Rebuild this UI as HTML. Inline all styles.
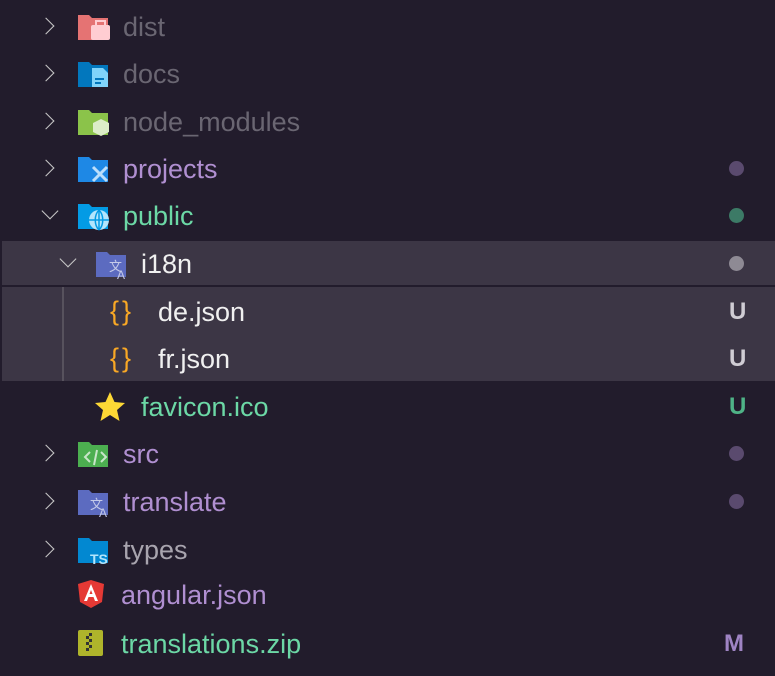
<!DOCTYPE html><html><head><style>
body{margin:0;width:775px;height:676px;background:#221c2c;font-family:"Liberation Sans",sans-serif;overflow:hidden;position:relative}
.r{position:absolute;left:0;width:775px;height:47px;font-size:27px;line-height:47px}
.t{position:absolute;top:1px}
.ch{position:absolute;width:11px;height:11px;border-right:1.5px solid #c8c8c8;border-bottom:1.5px solid #c8c8c8}
.cr{transform:rotate(-45deg);top:17px}
.cd{transform:rotate(45deg);top:13px}
.ic{position:absolute;top:9px}
.dot{position:absolute;left:729px;top:16px;width:15px;height:15px;border-radius:50%}
.b{position:absolute;left:729px;font-weight:bold;font-size:24px}
.br{position:absolute;left:110px;top:0;color:#f9a825;font-size:27px;letter-spacing:3px}
.g{color:#6cd8a6}.p{color:#b08fd1}.gr{color:#6a6672}.w{color:#f0f0f0}
</style></head><body>
<div style="position:absolute;left:2px;top:241px;width:773px;height:44px;background:#3c3645"></div>
<div style="position:absolute;left:2px;top:287px;width:773px;height:94px;background:#3c3645"></div>
<div style="position:absolute;left:62px;top:287px;width:2px;height:94px;background:#57525d"></div>

<div class="r" style="top:3px"><div class="ch cr" style="left:40px"></div>
<svg class="ic" style="left:77px" width="34" height="30"><path d="M1 3h11l3 3h16v22H1z" fill="#e57373"/><rect x="14" y="13" width="19" height="15" rx="2" fill="#ffcdd2"/><rect x="19" y="9" width="9" height="6" fill="none" stroke="#ffcdd2" stroke-width="2"/></svg>
<span class="t gr" style="left:123px">dist</span></div>

<div class="r" style="top:50px"><div class="ch cr" style="left:40px"></div>
<svg class="ic" style="left:77px" width="34" height="30"><path d="M1 3h11l3 3h16v22H1z" fill="#0277bd"/><path d="M15 9h11l5 5v14H15z" fill="#81d4fa"/><rect x="18" y="19" width="9" height="2" fill="#0277bd"/><rect x="18" y="23" width="6" height="2" fill="#0277bd"/></svg>
<span class="t gr" style="left:123px">docs</span></div>

<div class="r" style="top:98px"><div class="ch cr" style="left:40px"></div>
<svg class="ic" style="left:77px" width="34" height="30"><path d="M1 3h11l3 3h16v22H1z" fill="#8bc34a"/><path d="M24 12l8 4v9l-8 4-8-4v-9z" fill="#dcedc8"/></svg>
<span class="t gr" style="left:123px">node_modules</span></div>

<div class="r" style="top:145px"><div class="ch cr" style="left:40px"></div>
<svg class="ic" style="left:77px" width="34" height="30"><path d="M1 3h11l3 3h16v22H1z" fill="#1e88e5"/><path d="M16 13l14 14M30 13l-14 14" stroke="#bbdefb" stroke-width="3"/></svg>
<span class="t p" style="left:123px">projects</span><div class="dot" style="background:#5a4a6e"></div></div>

<div class="r" style="top:192px"><div class="ch cd" style="left:44px"></div>
<svg class="ic" style="left:77px" width="34" height="30"><path d="M1 3h11l3 3h16v22H1z" fill="#039be5"/><circle cx="22" cy="19" r="10" fill="#b3e5fc"/><path d="M12 19h20M22 9v20M22 9c-5 5-5 15 0 20M22 9c5 5 5 15 0 20" stroke="#039be5" stroke-width="1.5" fill="none"/></svg>
<span class="t g" style="left:123px">public</span><div class="dot" style="background:#3c7a66"></div></div>

<div class="r" style="top:240px"><div class="ch cd" style="left:62px"></div>
<svg class="ic" style="left:95px" width="34" height="30"><path d="M1 3h11l3 3h16v22H1z" fill="#5c6bc0"/><text x="14" y="22" font-size="13" fill="#c5cae9">文</text><text x="22" y="30" font-size="12" fill="#c5cae9">A</text></svg>
<span class="t w" style="left:141px">i18n</span><div class="dot" style="background:#8e8a94"></div></div>

<div class="r" style="top:288px">
<span class="br">{}</span>
<span class="t w" style="left:158px">de.json</span><span class="b" style="color:#d0cdd4">U</span></div>

<div class="r" style="top:335px">
<span class="br">{}</span>
<span class="t w" style="left:158px">fr.json</span><span class="b" style="color:#d0cdd4">U</span></div>

<div class="r" style="top:383px">
<svg class="ic" style="left:94px;top:8px" width="32" height="32"><path d="M16 1l4.5 10 10.5 1-8 7 2.5 11L16 24l-9.5 6L9 19 1 12l10.5-1z" fill="#fdd835"/></svg>
<span class="t g" style="left:141px">favicon.ico</span><span class="b" style="color:#4fb387">U</span></div>

<div class="r" style="top:430px"><div class="ch cr" style="left:40px"></div>
<svg class="ic" style="left:77px" width="34" height="30"><path d="M1 3h11l3 3h16v22H1z" fill="#4caf50"/><path d="M13 13l-5 5 5 5M24 13l5 5-5 5M20 11l-3 15" stroke="#c8e6c9" stroke-width="2" fill="none"/></svg>
<span class="t p" style="left:123px">src</span><div class="dot" style="background:#5a4a6e"></div></div>

<div class="r" style="top:478px"><div class="ch cr" style="left:40px"></div>
<svg class="ic" style="left:77px" width="34" height="30"><path d="M1 3h11l3 3h16v22H1z" fill="#5c6bc0"/><text x="13" y="22" font-size="13" fill="#c5cae9">文</text><text x="22" y="30" font-size="12" fill="#c5cae9">A</text></svg>
<span class="t p" style="left:123px">translate</span><div class="dot" style="background:#5a4a6e"></div></div>

<div class="r" style="top:526px"><div class="ch cr" style="left:40px"></div>
<svg class="ic" style="left:77px" width="34" height="30"><path d="M1 3h11l3 3h16v22H1z" fill="#0288d1"/><text x="13" y="29" font-size="14" font-weight="bold" fill="#b3e5fc" font-family="Liberation Sans">TS</text></svg>
<span class="t" style="left:123px;color:#a8a4ae">types</span></div>

<div class="r" style="top:571px">
<svg class="ic" style="left:77px;top:8px" width="28" height="30"><path d="M14 1l13 4-2 18-11 6-11-6L1 5z" fill="#e53935"/><path d="M14 5l-7 17h3l1.5-4h5l1.5 4h3zM12.5 15l1.5-4 1.5 4z" fill="#fff"/></svg>
<span class="t p" style="left:121px">angular.json</span></div>

<div class="r" style="top:620px">
<svg class="ic" style="left:77px;top:9px" width="28" height="28"><rect x="1" y="1" width="25" height="26" rx="2" fill="#afb42b"/><path d="M12 4h3v3h-3zM12 10h3v3h-3zM12 16h3v3h-3zM9 7h3v3H9zM9 13h3v3H9zM9 19h3v3H9z" fill="#333"/></svg>
<span class="t g" style="left:121px">translations.zip</span><span class="b" style="color:#9f84c4;left:724px">M</span></div>
</body></html>
